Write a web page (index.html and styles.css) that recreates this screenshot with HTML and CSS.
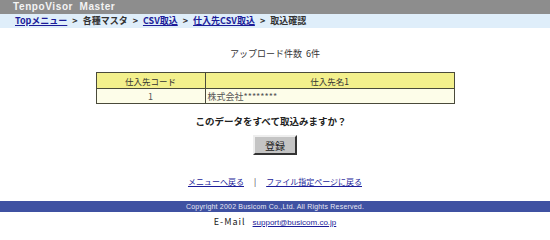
FILE: index.html
```html
<!DOCTYPE html>
<html lang="ja">
<head>
<meta charset="utf-8">
<title>TenpoVisor Master</title>
<link rel="stylesheet" href="styles.css">
</head>
<body>
<div class="titlebar">TenpoVisor Master</div>
<div class="crumbs">
  <a href="#">Topメニュー</a><span class="gt">&gt;</span>各種マスタ<span class="gt">&gt;</span><a href="#">CSV取込</a><span class="gt">&gt;</span><a href="#">仕入先CSV取込</a><span class="gt">&gt;</span>取込確認
</div>
<main class="content">
  <p class="count">アップロード件数&nbsp;&nbsp;6件</p>
  <table class="data">
    <thead>
      <tr><th class="c1">仕入先コード</th><th>仕入先名1</th></tr>
    </thead>
    <tbody>
      <tr><td class="num">1</td><td>株式会社********</td></tr>
    </tbody>
  </table>
  <p class="question">このデータをすべて取込みますか？</p>
  <div class="actions"><button class="btn" type="button">登録</button></div>
  <p class="links"><a href="#">メニューへ戻る</a><span class="sep">|</span><a href="#">ファイル指定ページに戻る</a></p>
</main>
<footer>
  <div class="copy">Copyright 2002 Busicom Co.,Ltd. All Rights Reserved.</div>
  <div class="mail"><span class="label">E-Mail</span><a href="#">support@busicom.co.jp</a></div>
</footer>
</body>
</html>
```
FILE: styles.css
```css
html, body {
  margin: 0;
  padding: 0;
  background: #ffffff;
}
body {
  width: 550px;
  font-family: "Noto Sans CJK JP", "Noto Sans", "Liberation Sans", sans-serif;
  font-size: 10px;
  color: #222;
}
.titlebar {
  height: 14px;
  line-height: 14px;
  background: #8d8d8d;
  color: #f4f4f4;
  font-family: "Liberation Sans", sans-serif;
  font-weight: bold;
  font-size: 10px;
  padding-left: 13px;
  letter-spacing: 0.6px;
  word-spacing: 3px;
}
.crumbs {
  height: 14px;
  line-height: 14px;
  background: #dfeefa;
  padding-left: 15px;
  font-weight: bold;
  font-size: 9px;
  color: #333;
  white-space: nowrap;
}
.crumbs a {
  color: #1c1c99;
  text-decoration: underline;
}
.crumbs .gt {
  margin: 0 5px;
}
.content {
  display: flex;
  flex-direction: column;
  align-items: center;
}
.count {
  margin: 19px 0 0 0;
  height: 14px;
  line-height: 14px;
  font-size: 9px;
  color: #333;
}
.data {
  margin-top: 11px;
  width: 359px;
  border-collapse: collapse;
  border: 1px solid #4a4a3a;
  font-size: 9px;
  color: #555;
}
.data th {
  height: 15px;
  padding: 0;
  background: #f3f08c;
  border: 1px solid #4a4a3a;
  font-weight: normal;
  color: #333;
  font-size: 8.5px;
}
.data th.c1 {
  width: 108px;
}
.data td {
  height: 14px;
  padding: 0 2px;
  background: #fdfde9;
  border: 1px solid #4a4a3a;
  border-top: 1px solid #d8d8c0;
}
.data td.num {
  text-align: center;
}
.question {
  margin: 10px 0 0 0;
  height: 14px;
  line-height: 14px;
  font-weight: bold;
  font-size: 9.5px;
  color: #222;
  padding-right: 8px;
}
.actions {
  margin-top: 7px;
}
.btn {
  width: 44px;
  height: 20px;
  padding: 0;
  background: #c4c4c4;
  border: 2px solid;
  border-color: #eeeeee #333333 #333333 #eeeeee;
  font-family: "Noto Sans CJK JP", sans-serif;
  font-size: 10px;
  color: #222;
}
.links {
  margin: 20px 0 0 0;
  height: 14px;
  line-height: 14px;
  font-size: 8px;
}
.links a {
  color: #1c1c99;
  text-decoration: underline;
}
.sep {
  margin: 0 10px;
  color: #333;
}
footer {
  margin-top: 12px;
}
.copy {
  height: 11px;
  line-height: 11px;
  background: #3f51a2;
  color: #e8e8f4;
  text-align: center;
  font-family: "Liberation Sans", sans-serif;
  font-size: 7px;
  letter-spacing: 0.2px;
}
.mail {
  display: flex;
  justify-content: center;
  align-items: baseline;
  gap: 7px;
  margin-top: 3px;
  height: 14px;
  line-height: 14px;
  color: #222;
}
.mail .label {
  font-size: 9px;
  letter-spacing: 1px;
}
.mail a {
  font-family: "Liberation Sans", sans-serif;
  font-size: 8px;
  color: #1c1c99;
  text-decoration: underline;
}
```
